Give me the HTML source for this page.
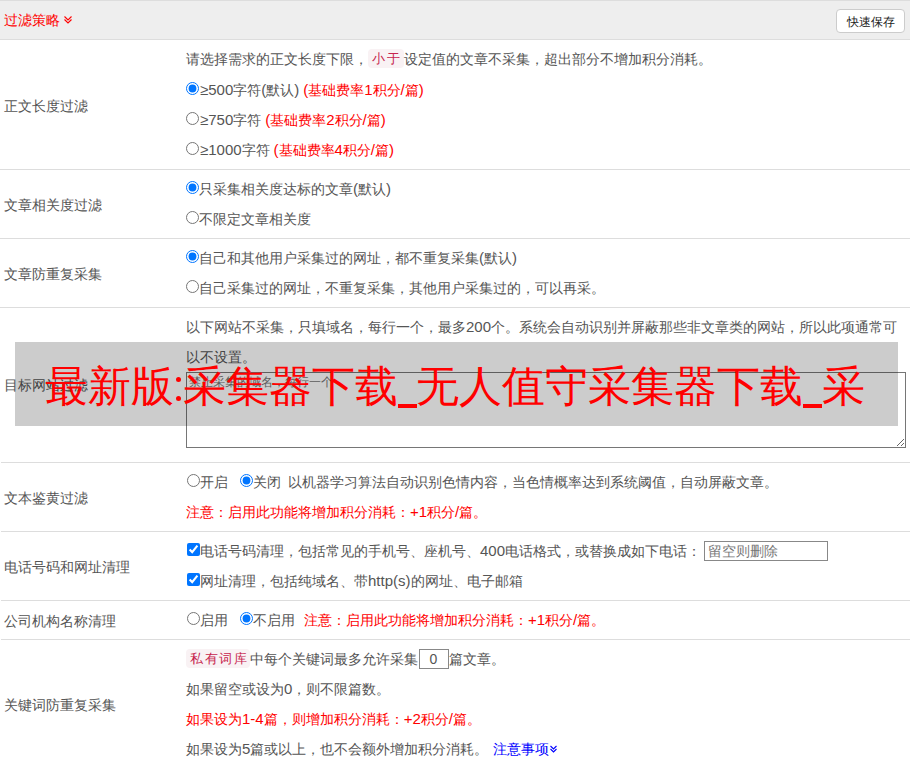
<!DOCTYPE html>
<html><head><meta charset="utf-8">
<style>
html,body{margin:0;padding:0;background:#fff;}
body{font-family:"Liberation Sans",sans-serif;font-size:14px;color:#555;width:912px;height:768px;overflow:hidden;position:relative;}
table{border-collapse:collapse;width:910px;table-layout:fixed;}
td{padding:0;vertical-align:middle;border-bottom:1px solid #ddd;}
tr.hd td{background:#eee;border-top:1px solid #ddd;height:38px;}
td.l{padding-left:4px;padding-top:4px;}
td.r{padding:4px 0 4px 4px;}
.ln{height:30px;line-height:30px;white-space:nowrap;}
.red{color:#f00;}
.lt{font-size:15px;}
.btn{position:absolute;left:836px;top:9px;width:67px;height:22px;border:1px solid #ccc;border-radius:4px;background:#fff;font-size:12px;color:#222;text-align:center;line-height:25px;box-sizing:content-box;}
input[type=radio],input[type=checkbox]{margin:0;width:13px;height:13px;vertical-align:0;}
.badge{display:inline-block;background:#f9f2f4;color:#c7254e;padding:0 2.5px 0 4px;font-size:13px;letter-spacing:1.5px;line-height:19px;height:19px;border-radius:4px;vertical-align:1px;}
.b4{padding-right:1.5px;}
.num{width:30px;height:20px;box-sizing:border-box;border:1px solid #888;margin:0 0 0 1px;padding:0;text-align:center;font-family:inherit;font-size:14px;color:#555;vertical-align:0;}
.tel{width:124px;height:20px;box-sizing:border-box;border:1px solid #888;margin:0 0 0 3px;padding:0 3px;font-family:inherit;font-size:14px;color:#555;vertical-align:0;}
.tel::placeholder{color:#777;}
.m1{margin-left:1px !important;}
.wm{position:absolute;left:15px;top:342px;width:883px;height:84px;background:rgba(0,0,0,0.2);}
.wmt{position:absolute;left:45px;top:356px;font-size:43px;color:#f00;white-space:nowrap;line-height:60px;}
.wc,.wu{display:inline-block;position:relative;height:60px;vertical-align:top;}
.wc{width:9px;}
.wc i{position:absolute;left:2px;width:5px;height:5px;border-radius:50%;background:#f00;}
.wu i{position:absolute;left:0;top:48px;width:19px;height:4px;background:#f00;}
.bx{position:absolute;left:0;width:1px;height:1px;background:#fff;}
textarea{position:absolute;left:186px;top:372px;width:720px;height:76px;box-sizing:border-box;border:1px solid #767676;font-size:12px;padding:1px 2px 2px 2px;margin:0;resize:both;font-family:inherit;}
</style></head><body>
<table>
<colgroup><col style="width:182px"><col></colgroup>
<tr class="hd"><td colspan="2" style="padding-left:4px;padding-top:2px;height:36px;color:#f00;position:relative">过滤策略<svg width="10" height="10" style="position:absolute;left:64px;top:14px" viewBox="0 0 10 10"><path d="M0.5 1.5L4 5L7.5 1.5M0.5 4.5L4 8L7.5 4.5" fill="none" stroke="#f00" stroke-width="1.1"/></svg></td></tr>
<tr><td class="l">正文长度过滤</td><td class="r">
<div class="ln" style="height:31px">请选择需求的正文长度下限，<span class="badge">小于</span>设定值的文章不采集，超出部分不增加积分消耗。</div>
<div class="ln"><input type="radio" checked><span class="lt" style="margin-left:1px">≥500</span>字符<span class="lt">(</span>默认<span class="lt">)</span> <span class="red"><span class="lt">(</span>基础费率<span class="lt">1</span>积分<span class="lt">/</span>篇<span class="lt">)</span></span></div>
<div class="ln"><input type="radio"><span class="lt" style="margin-left:1px">≥750</span>字符 <span class="red"><span class="lt">(</span>基础费率<span class="lt">2</span>积分<span class="lt">/</span>篇<span class="lt">)</span></span></div>
<div class="ln"><input type="radio"><span class="lt" style="margin-left:1px">≥1000</span>字符 <span class="red"><span class="lt">(</span>基础费率<span class="lt">4</span>积分<span class="lt">/</span>篇<span class="lt">)</span></span></div>
</td></tr>
<tr><td class="l">文章相关度过滤</td><td class="r">
<div class="ln"><input type="radio" checked>只采集相关度达标的文章<span class="lt">(</span>默认<span class="lt">)</span></div>
<div class="ln"><input type="radio">不限定文章相关度</div>
</td></tr>
<tr><td class="l">文章防重复采集</td><td class="r">
<div class="ln"><input type="radio" checked>自己和其他用户采集过的网址，都不重复采集<span class="lt">(</span>默认<span class="lt">)</span></div>
<div class="ln"><input type="radio">自己采集过的网址，不重复采集，其他用户采集过的，可以再采。</div>
</td></tr>
<tr><td class="l" style="padding-top:1px">目标网站过滤</td><td class="r" style="height:146px;vertical-align:top">
<div class="ln">以下网站不采集，只填域名，每行一个，最多<span class="lt">200</span>个。系统会自动识别并屏蔽那些非文章类的网站，所以此项通常可</div>
<div class="ln">以不设置。</div>
</td></tr>
<tr><td class="l">文本鉴黄过滤</td><td class="r">
<div class="ln"><input type="radio" class="m1">开启<input type="radio" checked style="margin-left:12px">关闭<span style="margin-left:7px">以机器学习算法自动识别色情内容，当色情概率达到系统阈值，自动屏蔽文章。</span></div>
<div class="ln red">注意：启用此功能将增加积分消耗：<span class="lt">+1</span>积分<span class="lt">/</span>篇。</div>
</td></tr>
<tr><td class="l">电话号码和网址清理</td><td class="r">
<div class="ln"><input type="checkbox" checked class="m1">电话号码清理，包括常见的手机号、座机号、<span class="lt">400</span>电话格式，或替换成如下电话：<input class="tel" placeholder="留空则删除"></div>
<div class="ln"><input type="checkbox" checked class="m1">网址清理，包括纯域名、带<span class="lt">htt<span>p</span>(s)</span>的网址、电子邮箱</div>
</td></tr>
<tr><td class="l">公司机构名称清理</td><td class="r">
<div class="ln"><input type="radio" class="m1">启用<input type="radio" checked style="margin-left:12px">不启用<span class="red" style="margin-left:9px">注意：启用此功能将增加积分消耗：<span class="lt">+1</span>积分<span class="lt">/</span>篇。</span></div>
</td></tr>
<tr><td class="l">关键词防重复采集</td><td class="r">
<div class="ln"><span class="badge b4">私有词库</span>中每个关键词最多允许采集<input class="num" value="0">篇文章。</div>
<div class="ln">如果留空或设为<span class="lt">0</span>，则不限篇数。</div>
<div class="ln red">如果设为<span class="lt">1-4</span>篇，则增加积分消耗：<span class="lt">+2</span>积分<span class="lt">/</span>篇。</div>
<div class="ln">如果设为<span class="lt">5</span>篇或以上，也不会额外增加积分消耗。 <span style="color:#00f;margin-left:1px">注意事项<svg width="9" height="9" viewBox="0 0 9 9" style="vertical-align:0px;margin-left:1px"><path d="M0.5 1L3.5 4L6.5 1M0.5 4L3.5 7L6.5 4" fill="none" stroke="#00f" stroke-width="1.1"/></svg></span></div>
</td></tr>
</table>
<div class="btn">快速保存</div>
<textarea placeholder="禁止采集的域名，每行一个"></textarea>
<div class="bx" style="top:462px"></div><div class="bx" style="top:531px"></div><div class="bx" style="top:600px"></div><div class="bx" style="top:639px"></div>
<div class="wm"></div>
<div class="wmt">最新版<span class="wc"><i style="top:21px"></i><i style="top:40px"></i></span>采集器下载<span class="wu" style="width:18px"><i></i></span>无人值守采集器下载<span class="wu" style="width:19px"><i></i></span>采</div>
</body></html>
